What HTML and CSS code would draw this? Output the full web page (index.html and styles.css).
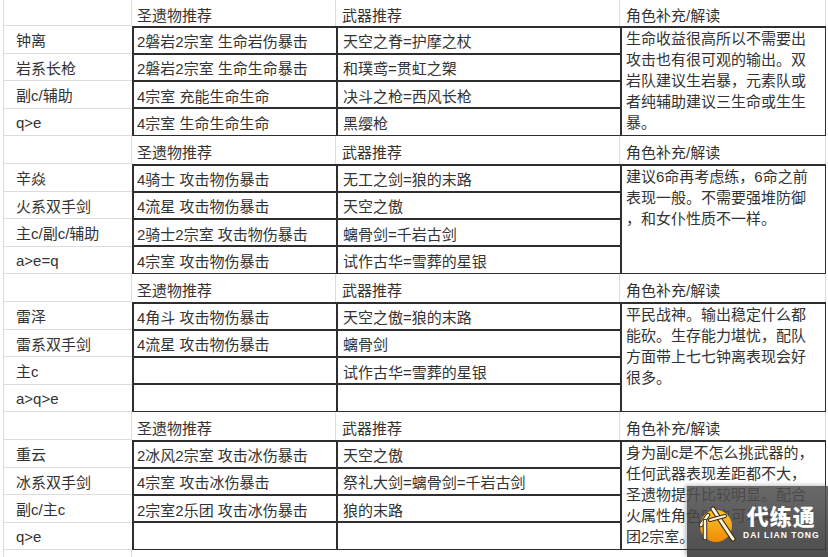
FILE: index.html
```html
<!DOCTYPE html>
<html lang="zh">
<head>
<meta charset="utf-8">
<title>角色推荐</title>
<link rel="stylesheet" href="styles.css">
</head>
<body>
<div class="sheet">
  <section class="sec first">
    <div class="hd c1"></div>
    <div class="hd c2">圣遗物推荐</div>
    <div class="hd c3">武器推荐</div>
    <div class="hd c4">角色补充/解读</div>
    <div class="names">
      <div class="nm">钟离</div>
      <div class="nm">岩系长枪</div>
      <div class="nm">副c/辅助</div>
      <div class="nm">q&gt;e</div>
    </div>
    <div class="box">
      <div class="cell a">2磐岩2宗室 生命岩伤暴击</div><div class="cell w">天空之脊=护摩之杖</div>
      <div class="note">生命收益很高所以不需要出<br>攻击也有很可观的输出。双<br>岩队建议生岩暴，元素队或<br>者纯辅助建议三生命或生生<br>暴。</div>
      <div class="cell a">2磐岩2宗室 生命生命暴击</div><div class="cell w">和璞鸢=贯虹之槊</div>
      <div class="cell a">4宗室 充能生命生命</div><div class="cell w">决斗之枪=西风长枪</div>
      <div class="cell a">4宗室 生命生命生命</div><div class="cell w">黑缨枪</div>
    </div>
  </section>

  <section class="sec">
    <div class="hd c1"></div>
    <div class="hd c2">圣遗物推荐</div>
    <div class="hd c3">武器推荐</div>
    <div class="hd c4">角色补充/解读</div>
    <div class="names">
      <div class="nm">辛焱</div>
      <div class="nm">火系双手剑</div>
      <div class="nm">主c/副c/辅助</div>
      <div class="nm">a&gt;e=q</div>
    </div>
    <div class="box">
      <div class="cell a">4骑士 攻击物伤暴击</div><div class="cell w">无工之剑=狼的末路</div>
      <div class="note">建议6命再考虑练，6命之前<br>表现一般。不需要强堆防御<br>，和女仆性质不一样。</div>
      <div class="cell a">4流星 攻击物伤暴击</div><div class="cell w">天空之傲</div>
      <div class="cell a">2骑士2宗室 攻击物伤暴击</div><div class="cell w">螭骨剑=千岩古剑</div>
      <div class="cell a">4宗室 攻击物伤暴击</div><div class="cell w">试作古华=雪葬的星银</div>
    </div>
  </section>

  <section class="sec">
    <div class="hd c1"></div>
    <div class="hd c2">圣遗物推荐</div>
    <div class="hd c3">武器推荐</div>
    <div class="hd c4">角色补充/解读</div>
    <div class="names">
      <div class="nm">雷泽</div>
      <div class="nm">雷系双手剑</div>
      <div class="nm">主c</div>
      <div class="nm">a&gt;q&gt;e</div>
    </div>
    <div class="box">
      <div class="cell a">4角斗 攻击物伤暴击</div><div class="cell w">天空之傲=狼的末路</div>
      <div class="note">平民战神。输出稳定什么都<br>能砍。生存能力堪忧，配队<br>方面带上七七钟离表现会好<br>很多。</div>
      <div class="cell a">4流星 攻击物伤暴击</div><div class="cell w">螭骨剑</div>
      <div class="cell a"></div><div class="cell w">试作古华=雪葬的星银</div>
      <div class="cell a"></div><div class="cell w"></div>
    </div>
  </section>

  <section class="sec">
    <div class="hd c1"></div>
    <div class="hd c2">圣遗物推荐</div>
    <div class="hd c3">武器推荐</div>
    <div class="hd c4">角色补充/解读</div>
    <div class="names">
      <div class="nm">重云</div>
      <div class="nm">冰系双手剑</div>
      <div class="nm">副c/主c</div>
      <div class="nm">q&gt;e</div>
    </div>
    <div class="box">
      <div class="cell a">2冰风2宗室 攻击冰伤暴击</div><div class="cell w">天空之傲</div>
      <div class="note">身为副c是不怎么挑武器的，<br>任何武器表现差距都不大，<br>圣遗物提升比较明显。配合<br>火属性角色时也可以用乐<br>团2宗室。</div>
      <div class="cell a">4宗室 攻击冰伤暴击</div><div class="cell w">祭礼大剑=螭骨剑=千岩古剑</div>
      <div class="cell a">2宗室2乐团 攻击冰伤暴击</div><div class="cell w">狼的末路</div>
      <div class="cell a"></div><div class="cell w"></div>
    </div>
  </section>
  <div class="tail"><div class="t1"></div><div class="t2"></div></div>
</div>

<div class="wm">
  <svg class="logo" width="38" height="38" viewBox="0 0 38 38">
    <defs>
      <linearGradient id="og" x1="0" y1="0" x2="0" y2="1">
        <stop offset="0" stop-color="#ffc629"/>
        <stop offset="1" stop-color="#ee8a07"/>
      </linearGradient>
    </defs>
    <circle cx="18" cy="20" r="16" fill="url(#og)"/>
    <path d="M10 9 L3 19" stroke="#3a2a10" stroke-width="4.5" stroke-linecap="round" fill="none"/>
    <path d="M10 9 L3 19" stroke="#fff6dc" stroke-width="2.5" stroke-linecap="round" fill="none"/>
    <path d="M7 15 L7 32" stroke="#3a2a10" stroke-width="4.5" stroke-linecap="round" fill="none"/>
    <path d="M7 15 L7 32" stroke="#fff6dc" stroke-width="2.5" stroke-linecap="round" fill="none"/>
    <path d="M15 3 L35 33" stroke="#3a2a10" stroke-width="5" stroke-linecap="round" fill="none"/>
    <path d="M15 3 L35 33" stroke="#fff6dc" stroke-width="3" stroke-linecap="round" fill="none"/>
    <path d="M12 14 L27 10" stroke="#3a2a10" stroke-width="4" stroke-linecap="round" fill="none"/>
    <path d="M12 14 L27 10" stroke="#fff6dc" stroke-width="2" stroke-linecap="round" fill="none"/>
  </svg>
  <div class="brand">
    <div class="bn">代练通</div>
    <div class="bs">DAI LIAN TONG</div>
  </div>
</div>
</body>
</html>
```

FILE: styles.css
```css
html, body {
  margin: 0;
  padding: 0;
  background: #ffffff;
}
body {
  width: 828px;
  height: 557px;
  overflow: hidden;
  position: relative;
  font-family: "Liberation Sans", "Noto Sans CJK SC", sans-serif;
  font-size: 15px;
  color: #333333;
}
.sheet {
  display: flex;
  flex-direction: column;
}
.sec {
  display: grid;
  grid-template-columns: 132px 204px 284px 206px;
  grid-template-rows: 28px 110px;
}
.sec.first {
  grid-template-rows: 26px 110px;
}
.hd {
  display: flex;
  align-items: center;
  padding-top: 2px;
  border-right: 1px solid #dcdcdc;
  white-space: nowrap;
  box-sizing: border-box;
}
.hd.c1 {
  margin-left: 3px;
  border-left: 1px solid #dcdcdc;
  border-bottom: 1px solid #dcdcdc;
}
.hd.c2 { padding-left: 5px; }
.hd.c3 { padding-left: 6px; }
.hd.c4 { padding-left: 6px; }
.names {
  margin-left: 3px;
  border-left: 1px solid #dcdcdc;
  display: grid;
  grid-template-rows: repeat(4, 1fr);
}
.nm {
  display: flex;
  align-items: center;
  padding-left: 12px;
  padding-top: 1px;
  border-bottom: 1px solid #dcdcdc;
  white-space: nowrap;
}
.box {
  grid-column: 2 / 5;
  display: grid;
  grid-template-columns: 202.5px 282.5px 1fr;
  grid-template-rows: repeat(4, 1fr);
  gap: 1.5px;
  padding: 1.5px;
  background: #2e2e2e;
}
.cell {
  background: #ffffff;
  display: flex;
  align-items: center;
  padding-top: 1px;
  white-space: nowrap;
  overflow: hidden;
}
.cell.a { padding-left: 3.5px; }
.cell.w { padding-left: 5.5px; }
.note {
  grid-column: 3;
  grid-row: 1 / 5;
  background: #ffffff;
  padding: 0 0 0 4.5px;
  line-height: 21.2px;
  white-space: nowrap;
  overflow: hidden;
}
.tail {
  display: grid;
  grid-template-columns: 132px 696px;
  height: 10px;
}
.t1 {
  margin-left: 3px;
  border-left: 1px solid #dcdcdc;
  border-right: 1px solid #dcdcdc;
}
.wm {
  position: absolute;
  right: 0;
  bottom: 0;
  width: 141px;
  height: 71px;
  background: linear-gradient(180deg, rgba(80,80,80,0.86) 0%, rgba(58,58,58,0.9) 100%);
  box-shadow: -2px -1px 4px rgba(0,0,0,0.25);
  display: flex;
  align-items: center;
  padding-left: 11px;
  gap: 7px;
  box-sizing: border-box;
}
.logo {
  flex: none;
  margin-top: 6px;
}
.brand {
  display: flex;
  flex-direction: column;
  align-items: center;
  color: #ffffff;
  margin-top: -2px;
}
.bn {
  font-family: "Noto Sans CJK SC", sans-serif;
  font-weight: 900;
  font-size: 22px;
  line-height: 26px;
  letter-spacing: 1px;
}
.bs {
  font-family: "Liberation Sans", sans-serif;
  font-weight: 700;
  font-size: 8.5px;
  letter-spacing: 1px;
  margin-top: 2px;
}
```
